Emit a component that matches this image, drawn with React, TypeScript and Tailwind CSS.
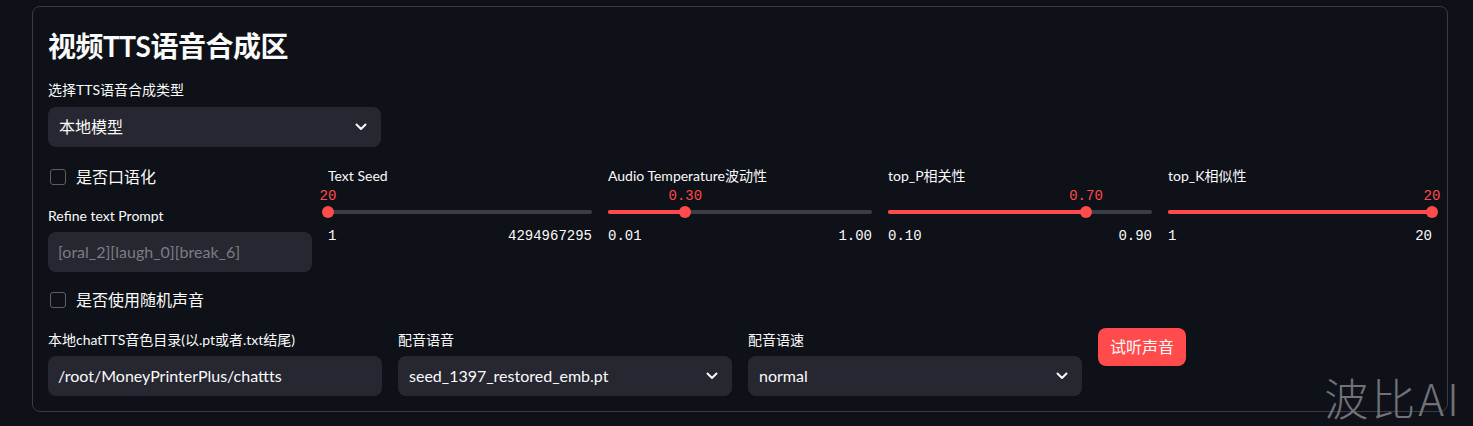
import React from "react";

const SANS = "font-['Lato','Noto_Sans_CJK_SC',sans-serif]";
const MONO = "font-['Liberation_Mono',monospace]";

function Chevron() {
  return (
    <svg width="12" height="8" viewBox="0 0 12 8" fill="none">
      <path
        d="M1.5 1.5 L6 6 L10.5 1.5"
        stroke="#fafafa"
        strokeWidth="2"
        strokeLinecap="round"
        strokeLinejoin="round"
      />
    </svg>
  );
}

function Label({ children }: { children: React.ReactNode }) {
  return <div className="h-5 text-[14px] leading-5 text-[#fafafa]">{children}</div>;
}

function SelectBox({ value }: { value: string }) {
  return (
    <div className="mt-[6px] h-10 w-full rounded-lg bg-[#262730] pl-[11px] pr-[14px] flex items-center justify-between">
      <span className="text-[16px] text-[#fafafa]">{value}</span>
      <Chevron />
    </div>
  );
}

function TextInput({ value, muted }: { value: string; muted?: boolean }) {
  return (
    <div
      className={
        "mt-[6px] h-10 w-full rounded-lg bg-[#262730] pl-[10px] flex items-center text-[16px] " +
        (muted ? "text-[#7b7c82]" : "text-[#fafafa]")
      }
    >
      {value}
    </div>
  );
}

function Checkbox({ label }: { label: string }) {
  return (
    <div className="h-[22px] pl-[2px] flex items-center gap-[10px]">
      <div className="w-4 h-4 rounded-[3px] border border-[#5e5f66]" />
      <span className="text-[16px] text-[#fafafa]">{label}</span>
    </div>
  );
}

function Slider({
  label,
  min,
  max,
  value,
  pct,
}: {
  label: string;
  min: string;
  max: string;
  value: string;
  pct: number;
}) {
  return (
    <div className="flex flex-col">
      <Label>{label}</Label>
      <div className="relative h-[18px]">
        <span
          className={`absolute top-[1px] -translate-x-1/2 text-[14px] leading-[18px] text-[#ff4b4b] ${MONO}`}
          style={{ left: `${pct}%` }}
        >
          {value}
        </span>
      </div>
      <div className="relative h-4">
        <div className="absolute left-0 right-0 top-[6px] h-1 rounded-full bg-[#3b3d45]" />
        <div
          className="absolute left-0 top-[6px] h-1 rounded-full bg-[#ff4b4b]"
          style={{ width: `${pct}%` }}
        />
        <div
          className="absolute top-[2px] w-3 h-3 -translate-x-1/2 rounded-full bg-[#ff4b4b]"
          style={{ left: `${pct}%` }}
        />
      </div>
      <div className={`mt-[6px] h-5 flex justify-between text-[14px] leading-5 text-[#fafafa] ${MONO}`}>
        <span>{min}</span>
        <span>{max}</span>
      </div>
    </div>
  );
}

export default function App() {
  return (
    <div className={`relative h-[426px] w-full bg-[#0e1117] pt-[6px] pl-8 ${SANS}`}>
      <div className="w-[1416px] h-[406px] rounded-lg border border-[#3a3c42] p-[15px] flex flex-col">
        <h2 className="mt-[7px] h-[34px] text-[28px] leading-[34px] font-bold tracking-[-0.5px] text-[#fafafa]">
          视频TTS语音合成区
        </h2>
        <div className="mt-[17px]">
          <Label>选择TTS语音合成类型</Label>
        </div>
        <div className="w-[333px]">
          <div className="-mt-[6px] pt-[7px]">
            <SelectBox value="本地模型" />
          </div>
        </div>

        <div className="mt-[19px] grid grid-cols-5 gap-4">
          <div className="flex flex-col">
            <Checkbox label="是否口语化" />
            <div className="mt-[18px]">
              <Label>Refine text Prompt</Label>
            </div>
            <TextInput value="[oral_2][laugh_0][break_6]" muted />
          </div>
          <Slider label="Text Seed" value="20" min="1" max="4294967295" pct={0} />
          <Slider label="Audio Temperature波动性" value="0.30" min="0.01" max="1.00" pct={29.3} />
          <Slider label="top_P相关性" value="0.70" min="0.10" max="0.90" pct={75} />
          <Slider label="top_K相似性" value="20" min="1" max="20" pct={100} />
        </div>

        <div className="mt-[17px]">
          <Checkbox label="是否使用随机声音" />
        </div>

        <div className="mt-[17px] grid grid-cols-4 gap-4">
          <div className="pt-[2px]">
            <Label>本地chatTTS音色目录(以.pt或者.txt结尾)</Label>
            <TextInput value="/root/MoneyPrinterPlus/chattts" />
          </div>
          <div className="pt-[2px]">
            <Label>配音语音</Label>
            <SelectBox value="seed_1397_restored_emb.pt" />
          </div>
          <div className="pt-[2px]">
            <Label>配音语速</Label>
            <SelectBox value="normal" />
          </div>
          <div>
            <button className="h-[38px] px-3 rounded-lg bg-[#ff4b4b] text-[16px] text-[#fafafa]">
              试听声音
            </button>
          </div>
        </div>
      </div>
      <div className="absolute right-[11px] top-[374px] text-[44px] leading-[46px] font-light tracking-[3px] text-[#707278] font-['Noto_Sans_CJK_SC',sans-serif]">
        波比AI
      </div>
    </div>
  );
}
